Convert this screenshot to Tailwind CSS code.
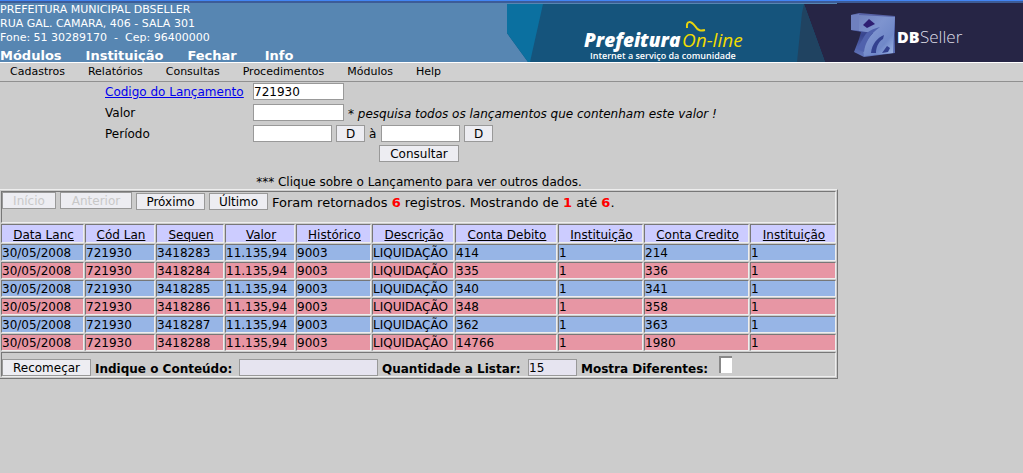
<!DOCTYPE html>
<html lang="pt-BR">
<head>
<meta charset="utf-8">
<meta name="viewport" content="width=device-width, initial-scale=1">
<title>Prefeitura On-line - Consulta de Lançamentos</title>
<script src="https://cdn.jsdelivr.net/npm/@tailwindcss/browser@4"></script>
</head>
<body class="min-h-screen bg-[#cccccc] text-black text-[12px] leading-[14px] font-['DejaVu_Sans',sans-serif]">
<header class="flex justify-between border-t border-[#4285f4] border-b border-b-white bg-[#5786b2] text-white">
  <div class="flex shrink-0 flex-col border-t-2 border-[#3c5c98] text-[11px] leading-[14px]">
    <p>PREFEITURA MUNICIPAL DBSELLER</p>
    <p>RUA GAL. CAMARA, 406 - SALA 301</p>
    <p class="whitespace-pre">Fone: 51 30289170  -  Cep: 96400000</p>
    <nav class="mt-1 flex h-[13px] gap-6 text-[13px] leading-[13px] font-bold">
      <a href="#modulos">Módulos</a><a href="#instituicao">Instituição</a><a href="#fechar">Fechar</a><a href="#info" class="ml-1">Info</a>
    </nav>
  </div>
  <div class="flex flex-1 justify-end border-t-2 border-[#3c5c98]">
  <svg class="h-[59px] w-[516px] shrink-0" viewBox="0 0 516 59" role="img" aria-label="Prefeitura On-line e DBSeller">
    <defs>
      <linearGradient id="front" x1="0" y1="0" x2="1" y2="1"><stop offset="0" stop-color="#7182bd"/><stop offset=".4" stop-color="#7e94cf"/><stop offset=".7" stop-color="#7088c8"/><stop offset="1" stop-color="#a5bde8"/></linearGradient>
      <linearGradient id="side" x1="0" y1="0" x2="0" y2="1"><stop offset="0" stop-color="#5a65a8"/><stop offset=".5" stop-color="#39468f"/><stop offset="1" stop-color="#6478bd"/></linearGradient>
    </defs>
    <path fill="#15547c" d="M0 1H330V59H21L0 30Z"/>
    <path fill="#0b70a0" d="M0 1H36L23 59H21L0 30Z"/>
    <path fill="#262545" d="M297 1H330V-1H516V59H318Z"/>
    <path fill="#204361" d="M297 1L318 59H290L295 10Z"/>
    <path fill="url(#side)" d="M344 12L352 10L388 13V50L357 54L347 49L352 36L354 29L344 27Z"/>
    <path fill="#6f80be" d="M344 12L352 11L353 28L344 27Z"/>
    <path fill="url(#front)" d="M352 12L388 14L386 50L357 53L356 47C357 41 361 35 366 30L352 28Z"/>
    <path fill="#2e1e72" d="M356 22L362 16L368 21L360 25Z"/>
    <path fill="#5062ad" d="M358 32C361 28 366 26 373 24C363 31 358 40 357 49L350 46Z"/>
    <path fill="#33418f" d="M364 50C365 41 370 35 377 32L376 36C371 39 369 45 369 50ZM375 50L380 43L383 45L381 49Z"/>
    <text x="77" y="44" fill="white" font-family="Open Sans, sans-serif" font-size="19" font-weight="800" font-style="italic">Prefeitura</text>
    <text x="175" y="44" fill="#f1dc00" font-family="Open Sans, sans-serif" font-size="19" font-style="italic">On-line</text>
    <path fill="none" stroke="#e9d40c" stroke-width="2" d="M180 25C179 17 184 18 188 23C191 28 194 28 198 27"/>
    <text x="83" y="56" fill="white" font-family="Open Sans, sans-serif" font-size="9" font-weight="600">Internet a serviço da comunidade</text>
    <text x="390" y="40" fill="white" font-family="Open Sans, sans-serif" font-size="16" font-weight="800">DB</text>
    <text x="413" y="40" fill="#dedee8" font-family="Open Sans, sans-serif" font-size="17" font-weight="300">Seller</text>
  </svg>
  </div>
</header>
<nav class="flex h-[19px] items-center gap-[23px] border-b border-[#909090] bg-[#d0d0d0] px-[10px] text-[11px]">
  <a href="#cadastros">Cadastros</a><a href="#relatorios">Relatórios</a><a href="#consultas">Consultas</a><a href="#procedimentos">Procedimentos</a><a href="#modulos2">Módulos</a><a href="#help">Help</a>
</nav>
<main class="max-w-[838px]">
  <form class="flex flex-col items-center pt-px">
    <div class="grid grid-cols-[144px_480px] gap-x-1 gap-y-1">
      <label for="codigo" class="whitespace-nowrap text-[#0000ee] underline pt-0.5"><a href="#lancamento">Codigo do Lançamento</a></label>
      <div class="flex h-[17px]"><input id="codigo" value="721930" class="w-[91px] border border-[#999] bg-white"></div>
      <label for="valor" class="pt-0.5">Valor</label>
      <div class="flex h-[17px] items-center gap-1"><input id="valor" class="h-[17px] w-[91px] border border-[#999] bg-white"><em class="whitespace-nowrap pt-0.5">* pesquisa todos os lançamentos que contenham este valor !</em></div>
      <label for="inicio" class="pt-0.5">Período</label>
      <div class="flex h-[17px] items-center gap-1">
        <input id="inicio" class="h-[17px] w-[79px] border border-[#999] bg-white">
        <button type="button" class="h-[17px] w-[29px] border border-[#999] bg-[#ededf2]">D</button>
        <label for="fim" class="w-2">à</label>
        <input id="fim" class="h-[17px] w-[79px] border border-[#999] bg-white">
        <button type="button" class="h-[17px] w-[29px] border border-[#999] bg-[#ededf2]">D</button>
      </div>
    </div>
    <button type="button" class="mt-[3px] h-[17px] w-[80px] border border-[#999] bg-[#ededf2]">Consultar</button>
    <p class="mt-[13px]">*** Clique sobre o Lançamento para ver outros dados.</p>
  </form>
  <table class="w-full table-fixed border-separate border-spacing-x-px border-spacing-y-px border border-l-0 border-t-[#eee] border-r-[#777] border-b-[#777] [&_td]:border [&_td]:border-t-[#777] [&_td]:border-l-[#777] [&_td]:border-r-[#eee] [&_td]:border-b-[#eee] [&_th]:border [&_th]:border-t-[#777] [&_th]:border-l-[#777] [&_th]:border-r-[#eee] [&_th]:border-b-[#eee] [&_td]:p-0 [&_th]:p-0">
    <colgroup><col class="w-[83px]"><col class="w-[70px]"><col class="w-[68px]"><col class="w-[70px]"><col class="w-[75px]"><col class="w-[82px]"><col class="w-[102px]"><col class="w-[85px]"><col class="w-[105px]"><col></colgroup>
    <thead>
      <tr class="h-[32px]"><td colspan="10" class="align-top">
        <div class="flex gap-1">
          <button disabled class="h-[17px] w-[54px] border border-[#999] bg-[#ededf2] text-[#c8c8c8]">Início</button>
          <button disabled class="h-[17px] w-[72px] border border-[#999] bg-[#ededf2] text-[#c8c8c8]">Anterior</button>
          <button class="mt-px h-[17px] w-[69px] border border-[#999] bg-[#ededf2]">Próximo</button>
          <button class="mt-px h-[17px] w-[59px] border border-[#999] bg-[#ededf2]">Último</button>
          <p class="whitespace-nowrap pt-1 text-[13px] leading-[14px]">Foram retornados <b class="text-[#ff0000]">6</b> registros. Mostrando de <b class="text-[#ff0000]">1</b> até <b class="text-[#ff0000]">6</b>.</p>
        </div></td></tr>
      <tr class="h-[19px] bg-[#ccccff] [&_th]:font-normal [&_th]:underline [&_th]:pl-0.5 [&_th]:pt-[3px] [&_th]:whitespace-nowrap"><th>Data Lanc</th><th>Cód Lan</th><th>Sequen</th><th>Valor</th><th>Histórico</th><th>Descrição</th><th>Conta Debito</th><th>Instituição</th><th>Conta Credito</th><th>Instituição</th></tr>
    </thead>
    <tbody class="[&_tr]:h-[17px] [&_td]:whitespace-nowrap">
      <tr class="bg-[#97b5e6]"><td>30/05/2008</td><td>721930</td><td>3418283</td><td>11.135,94</td><td>9003</td><td>LIQUIDAÇÃO</td><td>414</td><td>1</td><td>214</td><td>1</td></tr>
      <tr class="bg-[#e796a4]"><td>30/05/2008</td><td>721930</td><td>3418284</td><td>11.135,94</td><td>9003</td><td>LIQUIDAÇÃO</td><td>335</td><td>1</td><td>336</td><td>1</td></tr>
      <tr class="bg-[#97b5e6]"><td>30/05/2008</td><td>721930</td><td>3418285</td><td>11.135,94</td><td>9003</td><td>LIQUIDAÇÃO</td><td>340</td><td>1</td><td>341</td><td>1</td></tr>
      <tr class="bg-[#e796a4]"><td>30/05/2008</td><td>721930</td><td>3418286</td><td>11.135,94</td><td>9003</td><td>LIQUIDAÇÃO</td><td>348</td><td>1</td><td>358</td><td>1</td></tr>
      <tr class="bg-[#97b5e6]"><td>30/05/2008</td><td>721930</td><td>3418287</td><td>11.135,94</td><td>9003</td><td>LIQUIDAÇÃO</td><td>362</td><td>1</td><td>363</td><td>1</td></tr>
      <tr class="bg-[#e796a4]"><td>30/05/2008</td><td>721930</td><td>3418288</td><td>11.135,94</td><td>9003</td><td>LIQUIDAÇÃO</td><td>14766</td><td>1</td><td>1980</td><td>1</td></tr>
    </tbody>
    <tfoot><tr class="h-[25px]"><td colspan="10" class="align-bottom">
      <div class="flex items-end font-bold whitespace-nowrap">
        <button class="mr-1 h-[17px] w-[89px] border border-[#999] bg-[#ededf2] font-normal">Recomeçar</button>
        <label for="conteudo" class="w-36">Indique o Conteúdo:</label><input id="conteudo" class="mr-1 h-[17px] w-[139px] border border-[#999] bg-[#e6e4f0] font-normal">
        <label for="qtd" class="w-[146px]">Quantidade a Listar:</label><input id="qtd" value="15" class="mr-1 h-[17px] w-[49px] border border-[#999] bg-[#e6e4f0] font-normal">
        <label for="dif" class="w-[134px]">Mostra Diferentes:</label><input id="dif" type="checkbox" class="mb-[3px] ml-1 h-[17px] w-[13px] appearance-none border-t-2 border-l-2 border-[#888] bg-white">
      </div></td></tr></tfoot>
  </table>
</main>
</body>
</html>
